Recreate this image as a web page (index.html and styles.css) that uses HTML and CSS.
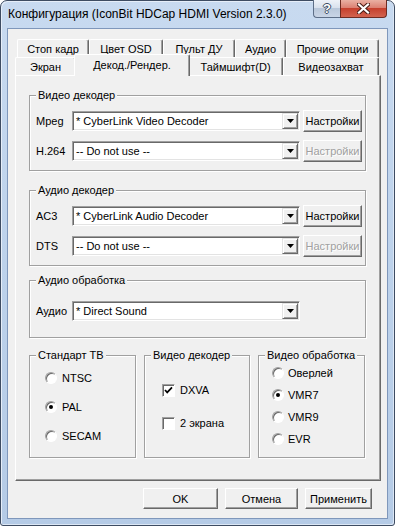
FILE: index.html
```html
<!DOCTYPE html>
<html lang="ru">
<head>
    <meta charset="UTF-8">
    <meta name="viewport" content="width=device-width, initial-scale=1.0">
    <title>Конфигурация</title>
    <link rel="stylesheet" href="styles.css">
</head>
<body>
    <div class="window">
        <div class="titlebar">
            <span class="title">Конфигурация (IconBit HDCap HDMI Version 2.3.0)</span>
            <div class="caption-buttons">
                <div class="cap-btn help">?</div>
                <div class="cap-btn close">
                    <svg width="13" height="11" viewBox="0 0 13 11">
                        <path d="M2 1.5 L11 9.5 M11 1.5 L2 9.5" stroke="#4a1d16" stroke-width="4.2" stroke-linecap="square"/>
                        <path d="M2 1.5 L11 9.5 M11 1.5 L2 9.5" stroke="#fff" stroke-width="2.2" stroke-linecap="square"/>
                    </svg>
                </div>
            </div>
        </div>

        <div class="client">
            <div class="tab-row back">
                <div class="tab">Стоп кадр</div>
                <div class="tab">Цвет OSD</div>
                <div class="tab">Пульт ДУ</div>
                <div class="tab">Аудио</div>
                <div class="tab">Прочие опции</div>
            </div>
            <div class="tab-row front">
                <div class="tab">Экран</div>
                <div class="tab active">Декод./Рендер.</div>
                <div class="tab">Таймшифт(D)</div>
                <div class="tab">Видеозахват</div>
            </div>

            <div class="panel">
                <fieldset class="group decoders">
                    <legend>Видео декодер</legend>
                    <div class="row">
                        <span class="row-label">Mpeg</span>
                        <div class="combo">
                            <span class="combo-text">* CyberLink Video Decoder</span>
                            <span class="combo-arrow"><svg width="7" height="4" viewBox="0 0 7 4"><path d="M0 0 H7 L3.5 4 Z" fill="#000"/></svg></span>
                        </div>
                        <button class="btn settings">Настройки</button>
                    </div>
                    <div class="row">
                        <span class="row-label">H.264</span>
                        <div class="combo">
                            <span class="combo-text">-- Do not use --</span>
                            <span class="combo-arrow"><svg width="7" height="4" viewBox="0 0 7 4"><path d="M0 0 H7 L3.5 4 Z" fill="#000"/></svg></span>
                        </div>
                        <button class="btn settings" disabled>Настройки</button>
                    </div>
                </fieldset>

                <fieldset class="group decoders audio-dec">
                    <legend>Аудио декодер</legend>
                    <div class="row">
                        <span class="row-label">AC3</span>
                        <div class="combo">
                            <span class="combo-text">* CyberLink Audio Decoder</span>
                            <span class="combo-arrow"><svg width="7" height="4" viewBox="0 0 7 4"><path d="M0 0 H7 L3.5 4 Z" fill="#000"/></svg></span>
                        </div>
                        <button class="btn settings">Настройки</button>
                    </div>
                    <div class="row">
                        <span class="row-label">DTS</span>
                        <div class="combo">
                            <span class="combo-text">-- Do not use --</span>
                            <span class="combo-arrow"><svg width="7" height="4" viewBox="0 0 7 4"><path d="M0 0 H7 L3.5 4 Z" fill="#000"/></svg></span>
                        </div>
                        <button class="btn settings" disabled>Настройки</button>
                    </div>
                </fieldset>

                <fieldset class="group audio-out">
                    <legend>Аудио обработка</legend>
                    <div class="row">
                        <span class="row-label">Аудио</span>
                        <div class="combo">
                            <span class="combo-text">* Direct Sound</span>
                            <span class="combo-arrow"><svg width="7" height="4" viewBox="0 0 7 4"><path d="M0 0 H7 L3.5 4 Z" fill="#000"/></svg></span>
                        </div>
                    </div>
                </fieldset>

                <div class="bottom-groups">
                    <fieldset class="group tv">
                        <legend>Стандарт ТВ</legend>
                        <div class="option"><span class="radio"></span>NTSC</div>
                        <div class="option"><span class="radio on"></span>PAL</div>
                        <div class="option"><span class="radio"></span>SECAM</div>
                    </fieldset>
                    <fieldset class="group dxva">
                        <legend>Видео декодер</legend>
                        <div class="option"><span class="check on"><svg width="11" height="11" viewBox="0 0 11 11"><path d="M2 5 L4.2 7.4 L9 2.4" stroke="#000" stroke-width="1.7" fill="none"/></svg></span>DXVA</div>
                        <div class="option"><span class="check"></span>2 экрана</div>
                    </fieldset>
                    <fieldset class="group render">
                        <legend>Видео обработка</legend>
                        <div class="option"><span class="radio"></span>Оверлей</div>
                        <div class="option"><span class="radio on"></span>VMR7</div>
                        <div class="option"><span class="radio"></span>VMR9</div>
                        <div class="option"><span class="radio"></span>EVR</div>
                    </fieldset>
                </div>
            </div>

            <div class="dialog-buttons">
                <button class="btn ok">OK</button>
                <button class="btn cancel">Отмена</button>
                <button class="btn apply">Применить</button>
            </div>
        </div>
    </div>
</body>
</html>
```

FILE: styles.css
```css
* {
    box-sizing: border-box;
    margin: 0;
    padding: 0;
}

body {
    background-color: #fff;
    font-family: "Liberation Sans", Arial, sans-serif;
    font-size: 11px;
    color: #000;
}

/* Cadre de la fenêtre */
.window {
    width: 395px;
    height: 526px;
    border: 1px solid #3e4c62;
    border-radius: 7px 7px 3px 3px;
    background: linear-gradient(#c8daf0, #bdd2eb 50%, #b5cbe6);
    box-shadow: inset 1px 1px 0 #e6eef9, inset -1px -1px 0 #dce7f5;
    padding: 0 6px 6px 6px;
    display: flex;
    flex-direction: column;
}

.titlebar {
    height: 27px;
    display: flex;
    align-items: flex-start;
}

.title {
    font-size: 12px;
    line-height: 15px;
    margin: 6px 0 0 1px;
    white-space: nowrap;
}

.caption-buttons {
    display: flex;
    margin-left: auto;
    margin-top: -1px;
    margin-right: 1px;
}

.cap-btn {
    height: 18px;
    display: flex;
    align-items: center;
    justify-content: center;
    border: 1px solid #5d6e87;
    border-top: none;
}

.help {
    width: 27px;
    border-right: none;
    border-radius: 0 0 0 4px;
    background: linear-gradient(#eef2f8, #d9e1ed 45%, #b9c7da 50%, #c9d5e6);
    color: #fff;
    font-weight: bold;
    font-size: 13px;
    text-shadow: 1px 0 0 #3b4a61, -1px 0 0 #3b4a61, 0 1px 0 #3b4a61, 0 -1px 0 #3b4a61;
}

.close {
    width: 47px;
    border-color: #6e2b22;
    border-radius: 0 0 4px 0;
    background: linear-gradient(#eab0a3, #dc8173 45%, #c6402e 50%, #d2634f);
}

/* Zone client */
.client {
    flex: 1;
    background-color: #f0f0f0;
    border: 1px solid #7f97bb;
    display: flex;
    flex-direction: column;
    padding: 10px 6px 0 7px;
}

.tab-row {
    display: flex;
    height: 18px;
}

.tab-row.back {
    margin-left: 2px;
}

.tab {
    display: flex;
    align-items: center;
    justify-content: center;
    background-color: #f0f0f0;
    border: 1px solid;
    border-bottom: none;
    border-color: #fff #696969 #fff #fff;
    border-radius: 2px 2px 0 0;
    box-shadow: inset -1px 0 0 #a0a0a0;
    white-space: nowrap;
}

.back .tab:nth-child(1) { width: 72px; }
.back .tab:nth-child(2) { width: 74px; }
.back .tab:nth-child(3) { width: 72px; }
.back .tab:nth-child(4) { width: 51px; }
.back .tab:nth-child(5) { width: 93px; }

.front .tab:nth-child(1) { width: 61px; }
.front .tab:nth-child(2) { width: 116px; }
.front .tab:nth-child(3) { width: 95px; }
.front .tab:nth-child(4) { width: 96px; }

.tab.active {
    height: 22px;
    margin: -3px -2px 0 -2px;
    padding-bottom: 2px;
    z-index: 1;
}

.panel {
    height: 406px;
    border: 1px solid;
    border-color: #fff #696969 #696969 #fff;
    box-shadow: inset -1px -1px 0 #a0a0a0;
    padding: 12px 14px 0 13px;
}

/* Cadres de groupe */
.group {
    border: 1px solid #a0a0a0;
    box-shadow: 1px 1px 0 #fff, inset 1px 1px 0 #fff;
    padding: 8px 3px 8px 6px;
    min-width: 0;
}

.group legend {
    padding: 0 2px;
    line-height: 14px;
    background-color: #f0f0f0;
}

.audio-dec {
    margin-top: 12px;
}

.audio-out {
    margin-top: 7px;
    padding-top: 13px;
    padding-bottom: 15px;
}

.row {
    display: flex;
    align-items: center;
    height: 22px;
}

.row + .row {
    margin-top: 8px;
}

.row-label {
    width: 36px;
}

.combo {
    width: 228px;
    height: 20px;
    display: flex;
    align-items: center;
    background-color: #fff;
    border: 1px solid;
    border-color: #a0a0a0 #fff #fff #a0a0a0;
    box-shadow: inset 1px 1px 0 #696969, inset -1px -1px 0 #e3e3e3;
    padding: 1px;
}

.combo-text {
    flex: 1;
    padding-left: 2px;
    white-space: nowrap;
}

.combo-arrow {
    width: 16px;
    height: 16px;
    display: flex;
    align-items: center;
    justify-content: center;
    background-color: #f0f0f0;
    border: 1px solid;
    border-color: #e3e3e3 #696969 #696969 #e3e3e3;
    box-shadow: inset 1px 1px 0 #fff, inset -1px -1px 0 #a0a0a0;
}

.btn {
    font: inherit;
    color: #000;
    background-color: #f0f0f0;
    border: 1px solid;
    border-color: #fff #696969 #696969 #fff;
    box-shadow: inset -1px -1px 0 #a0a0a0;
    white-space: nowrap;
}

.btn:disabled {
    color: #a0a0a0;
    text-shadow: 1px 1px 0 #fff;
}

.settings {
    width: 59px;
    height: 22px;
    margin-left: 3px;
}

/* Groupes du bas */
.bottom-groups {
    display: grid;
    grid-template-columns: 107px 106px 107px;
    column-gap: 8px;
    margin-top: 10px;
}

.bottom-groups .group {
    height: 110px;
    padding: 0 2px 0 6px;
    display: flex;
    flex-direction: column;
}

.option {
    display: flex;
    align-items: center;
    height: 14px;
    white-space: nowrap;
}

.tv .option {
    margin-left: 9px;
    margin-top: 15px;
}

.tv .option:first-of-type {
    margin-top: 9px;
}

.dxva .option {
    margin-left: 11px;
    margin-top: 19px;
}

.dxva .option:first-of-type {
    margin-top: 21px;
}

.render .option {
    margin-left: 7px;
    margin-top: 8px;
}

.render .option:first-of-type {
    margin-top: 4px;
}

.radio {
    position: relative;
    flex: none;
    width: 12px;
    height: 12px;
    border-radius: 50%;
    background-color: #fff;
    border: 1px solid;
    border-color: #a0a0a0 #fff #fff #a0a0a0;
    box-shadow: inset 1px 1px 0 #696969;
    margin-right: 5px;
}

.radio.on::after {
    content: "";
    position: absolute;
    left: 3px;
    top: 3px;
    width: 4px;
    height: 4px;
    border-radius: 50%;
    background-color: #000;
}

.render .radio {
    margin-right: 4px;
}

.check {
    flex: none;
    width: 13px;
    height: 13px;
    display: flex;
    background-color: #fff;
    border: 1px solid;
    border-color: #a0a0a0 #fff #fff #a0a0a0;
    box-shadow: inset 1px 1px 0 #696969;
    margin-right: 5px;
}

/* Boutons du dialogue */
.dialog-buttons {
    display: flex;
    justify-content: flex-end;
    gap: 7px;
    margin-top: 7px;
    padding-right: 9px;
}

.dialog-buttons .btn {
    height: 21px;
}

.ok { width: 75px; }
.cancel { width: 73px; }
.apply { width: 67px; }
```
